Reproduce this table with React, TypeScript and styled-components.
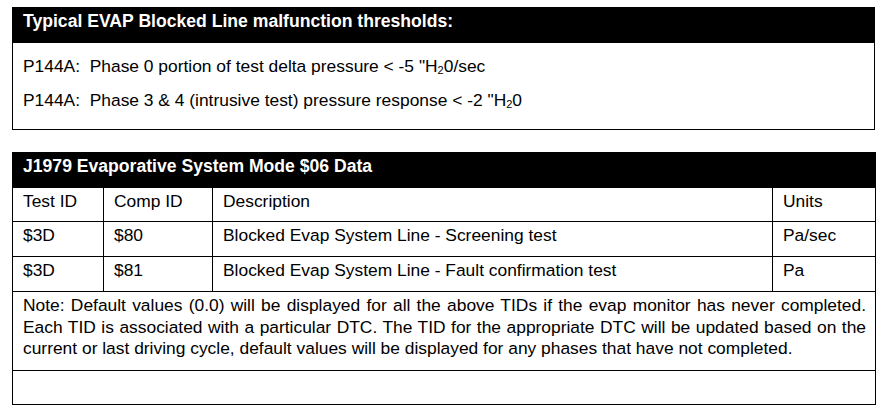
import React from "react";
import styled, { createGlobalStyle } from "styled-components";

const Global = createGlobalStyle`
  html, body { margin: 0; padding: 0; background: #fff; }
  body { font-family: "Liberation Sans", Arial, sans-serif; color: #000; }
`;

const Page = styled.div`
  display: flex;
  flex-direction: column;
  gap: 22px;
  padding: 7px 0 0 12px;
  width: 863px;
`;

const Frame = styled.table`
  width: 863px;
  border-collapse: collapse;
  table-layout: fixed;
  font-size: 17.4px;
`;

const TitleCell = styled.th`
  background: #000;
  color: #fff;
  font-weight: bold;
  font-size: 17.6px;
  text-align: left;
  height: 35px;
  padding: 0 10px 8px;
  border: 1px solid #000;
  box-sizing: border-box;
  vertical-align: middle;
  line-height: 20px;
`;

const BodyCell = styled.td`
  border: 1px solid #000;
  padding: 6px 10px 12px;
  vertical-align: top;
`;

const Line = styled.div`
  line-height: 34px;
`;

const Cell = styled.td<{ $h?: number }>`
  border: 1px solid #000;
  padding: 0 10px 8px;
  height: ${(p) => p.$h ?? 35}px;
  box-sizing: border-box;
  vertical-align: middle;
  line-height: 20px;
`;

const Note = styled.td`
  border: 1px solid #000;
  padding: 3px 9px 10px 10px;
  height: 79px;
  box-sizing: border-box;
  vertical-align: top;
  text-align: justify;
  line-height: 21.5px;
`;

const Sub = styled.sub`
  font-size: 11px;
  vertical-align: -2px;
  line-height: 0;
`;

const H2O = () => (
  <>
    "H<Sub>2</Sub>0
  </>
);

export default function App() {
  return (
    <>
      <Global />
      <Page>
        <Frame>
          <tbody>
            <tr>
              <TitleCell>Typical EVAP Blocked Line malfunction thresholds:</TitleCell>
            </tr>
            <tr>
              <BodyCell>
                <Line>
                  P144A:&nbsp; Phase 0 portion of test delta pressure &lt; -5 <H2O />/sec
                </Line>
                <Line>
                  P144A:&nbsp; Phase 3 &amp; 4 (intrusive test) pressure response &lt; -2 <H2O />
                </Line>
              </BodyCell>
            </tr>
          </tbody>
        </Frame>
        <Frame>
          <colgroup>
            <col style={{ width: 91 }} />
            <col style={{ width: 109 }} />
            <col style={{ width: 560 }} />
            <col style={{ width: 103 }} />
          </colgroup>
          <tbody>
            <tr>
              <TitleCell colSpan={4}>J1979 Evaporative System Mode $06 Data</TitleCell>
            </tr>
            <tr>
              <Cell $h={34}>Test ID</Cell>
              <Cell $h={34}>Comp ID</Cell>
              <Cell $h={34}>Description</Cell>
              <Cell $h={34}>Units</Cell>
            </tr>
            <tr>
              <Cell>$3D</Cell>
              <Cell>$80</Cell>
              <Cell>Blocked Evap System Line - Screening test</Cell>
              <Cell>Pa/sec</Cell>
            </tr>
            <tr>
              <Cell>$3D</Cell>
              <Cell>$81</Cell>
              <Cell>Blocked Evap System Line - Fault confirmation test</Cell>
              <Cell>Pa</Cell>
            </tr>
            <tr>
              <Note colSpan={4}>
                Note: Default values (0.0) will be displayed for all the above TIDs if the evap monitor has never
                completed. Each TID is associated with a particular DTC. The TID for the appropriate DTC will be
                updated based on the current or last driving cycle, default values will be displayed for any
                phases that have not completed.
              </Note>
            </tr>
            <tr>
              <Cell $h={34} colSpan={4} />
            </tr>
          </tbody>
        </Frame>
      </Page>
    </>
  );
}
